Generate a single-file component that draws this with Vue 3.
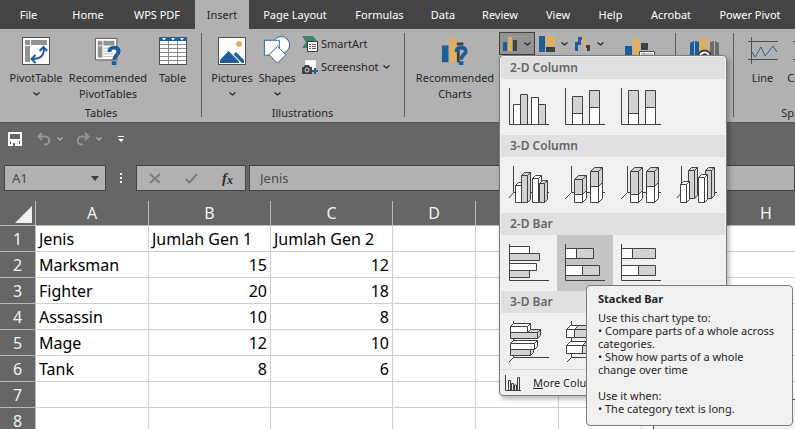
<script setup>
import { ref } from 'vue'

const tabs = ['File', 'Home', 'WPS PDF', 'Insert', 'Page Layout', 'Formulas', 'Data', 'Review', 'View', 'Help', 'Acrobat', 'Power Pivot']
const activeTab = ref('Insert')
const cellValue = ref('Jenis')
const cellName = ref('A1')

const columns = ['A', 'B', 'C', 'D', 'E', 'F', 'G', 'H']
const rows = [
  ['Jenis', 'Jumlah Gen 1', 'Jumlah Gen 2'],
  ['Marksman', 15, 12],
  ['Fighter', 20, 18],
  ['Assassin', 10, 8],
  ['Mage', 12, 10],
  ['Tank', 8, 6],
  [],
  [],
]

const W = '#ffffff'
const G = '#d2d2d2'

// A block is [x, y, width, height, fill, depthX, depthY].
function faces([x, y, w, h, fill, dx = 0, dy = 0]) {
  const out = [{ d: `M${x} ${y}h${w}v${h}h${-w}z`, fill }]
  if (dx) {
    out.push({ d: `M${x} ${y}l${dx} ${-dy}h${w}l${-dx} ${dy}z`, fill })
    out.push({ d: `M${x + w} ${y}l${dx} ${-dy}v${h}l${-dx} ${dy}z`, fill })
  }
  return out
}

const flatAxis = 'M.5 1V37.5H40'
const sections = [
  {
    title: '2-D Column',
    items: [
      { name: 'Clustered Column', axis: flatAxis, blocks: [[4.5, 17.5, 7, 20, W], [11.5, 7.5, 7, 30, G], [22.5, 10.5, 7, 27, W], [29.5, 17.5, 7, 20, G]] },
      { name: 'Stacked Column', axis: flatAxis, blocks: [[7.5, 9.5, 10, 17, G], [7.5, 26.5, 10, 11, W], [24.5, 3.5, 10, 17, G], [24.5, 20.5, 10, 17, W]] },
      { name: '100% Stacked Column', axis: flatAxis, blocks: [[7.5, 3.5, 10, 23, G], [7.5, 26.5, 10, 11, W], [24.5, 3.5, 10, 17, G], [24.5, 20.5, 10, 17, W]] },
    ],
  },
  {
    title: '3-D Column',
    items: [
      { name: '3-D Clustered Column', axis: 'M4.5 1V27.5L0 33M4.5 27.5H40', blocks: [[6.5, 20.5, 6, 17, W, 3, 3], [12.5, 10.5, 6, 27, G, 3, 3], [23.5, 13.5, 6, 24, W, 3, 3], [30.5, 18.5, 5, 19, G, 3, 3]] },
      { name: '3-D Stacked Column', axis: 'M6.5 1V27.5L0 34M6.5 27.5H40', blocks: [[9.5, 29.5, 8, 8, W, 4, 4], [9.5, 14.5, 8, 15, G, 4, 4], [25.5, 21.5, 8, 16, W, 4, 4], [25.5, 6.5, 8, 15, G, 4, 4]] },
      { name: '3-D 100% Stacked Column', axis: 'M6.5 1V27.5L0 34M6.5 27.5H40', blocks: [[9.5, 29.5, 8, 8, W, 4, 4], [9.5, 6.5, 8, 23, G, 4, 4], [25.5, 21.5, 8, 16, W, 4, 4], [25.5, 6.5, 8, 15, G, 4, 4]] },
      { name: '3-D Column', axis: 'M4.5 1V27.5L0 33M4.5 27.5H40', blocks: [[11.5, 5.5, 6, 28, G, 3, 3], [3.5, 19.5, 6, 18, W, 3, 3], [28.5, 5.5, 6, 28, G, 3, 3], [21.5, 12.5, 6, 25, W, 3, 3]] },
    ],
  },
  {
    title: '2-D Bar',
    items: [
      { name: 'Clustered Bar', axis: flatAxis, blocks: [[0.5, 3.5, 20, 7, W], [0.5, 10.5, 30, 7, G], [0.5, 20.5, 27, 7, W], [0.5, 27.5, 20, 7, G]] },
      { name: 'Stacked Bar', selected: true, axis: flatAxis, blocks: [[0.5, 5.5, 11, 10, W], [11.5, 5.5, 17, 10, G], [0.5, 22.5, 17, 10, W], [17.5, 22.5, 17, 10, G]] },
      { name: '100% Stacked Bar', axis: flatAxis, blocks: [[0.5, 5.5, 11, 10, W], [11.5, 5.5, 23, 10, G], [0.5, 22.5, 17, 10, W], [17.5, 22.5, 17, 10, G]] },
    ],
  },
  {
    title: '3-D Bar',
    items: [
      { name: '3-D Clustered Bar', axis: 'M4.5 0V36.5L0 41M4.5 36.5H40', blocks: [[1.5, 28.5, 20, 6, G, 3, 3], [1.5, 22.5, 24, 6, W, 3, 3], [1.5, 11.5, 27, 6, G, 3, 3], [1.5, 5.5, 17, 6, W, 3, 3]] },
      { name: '3-D Stacked Bar', axis: 'M6.5 0V36.5L2 41M6.5 36.5H40', blocks: [[1.5, 8.5, 8, 8, W, 4, 4], [9.5, 8.5, 15, 8, G, 4, 4], [1.5, 24.5, 16, 8, W, 4, 4], [17.5, 24.5, 15, 8, G, 4, 4]] },
      { name: '3-D 100% Stacked Bar', axis: 'M6.5 0V36.5L2 41M6.5 36.5H40', blocks: [[1.5, 8.5, 8, 8, W, 4, 4], [9.5, 8.5, 23, 8, G, 4, 4], [1.5, 24.5, 16, 8, W, 4, 4], [17.5, 24.5, 15, 8, G, 4, 4]] },
    ],
  },
]
</script>

<template>
  <div class="app">
    <nav class="tabs">
      <button v-for="t in tabs" :key="t" class="tab" :class="{ active: t === activeTab }" @click="activeTab = t">{{ t }}</button>
    </nav>

    <div class="ribbon">
      <section class="group tables">
        <div class="tools">
          <button class="big w-pivot">
            <svg width="28" height="28" viewBox="0 0 28 28">
              <rect x=".5" y=".5" width="27" height="27" fill="#fff" stroke="#505050" />
              <path d="M3 3h5v5H3zM9 3h16v5H9zM3 9h5v16H3z" fill="#929292" />
              <path d="M21.500 10C23 18 19 22 10 22" fill="none" stroke="#1f5c99" stroke-width="2" />
              <path d="M17.500 14L21.500 10L25 14M13.500 18L9.500 22L13.500 26" fill="none" stroke="#1f5c99" stroke-width="2" />
            </svg>
            <span>PivotTable</span>
            <svg class="chev" width="7" height="4" viewBox="0 0 7 4"><path d="M.5.5L3.500 3L6.500.5" /></svg>
          </button>
          <button class="big w-rec">
            <svg width="28" height="30" viewBox="0 0 28 30">
              <path d="M.5 1.500H23.500V24.500H.5z" fill="#fff" stroke="#505050" />
              <path d="M3 4h5v5H3zM9 4h12v5H9zM3 10h5v12H3z" fill="#929292" />
              <path d="M9 12h10M9 15h10M9 18h10M9 21h10" stroke="#b9b9b9" />
              <path d="M15.500 16C15.500 12 18 11.500 20.500 11.500C23.500 11.500 25.500 13 25.500 15.500C25.500 19 20.500 19 20.500 24.500" fill="none" stroke="#1f5c99" stroke-width="4" />
              <rect x="18" y="26" width="5" height="4" fill="#1f5c99" />
            </svg>
            <span>Recommended<br />PivotTables</span>
          </button>
          <button class="big w-table">
            <svg width="28" height="28" viewBox="0 0 28 28">
              <rect x=".5" y=".5" width="27" height="27" fill="#fff" stroke="#505050" />
              <path d="M0 0h28v4H0z" fill="#1f5c99" />
              <path d="M3 1h4L5 3.500zM12 1h4L14 3.500zM21 1h4L23 3.500z" fill="#fff" />
              <path d="M1 7.500H27M1 11.500H27M1 15.500H27M1 19.500H27M1 23.500H27M9.500 4V27M18.500 4V27" stroke="#8a8a8a" />
            </svg>
            <span>Table</span>
          </button>
        </div>
        <h2>Tables</h2>
      </section>

      <section class="group illus">
        <div class="tools">
          <button class="big w-pic">
            <svg width="28" height="28" viewBox="0 0 28 28">
              <rect x=".5" y=".5" width="27" height="27" fill="#fff" stroke="#505050" />
              <circle cx="21" cy="7" r="3" fill="#dfb061" />
              <path d="M2 26V23L10.500 14L21 24.500V26z" fill="#1f5c99" />
              <path d="M15.500 17.500L18 15L26 23V26H24z" fill="#1f5c99" />
            </svg>
            <span>Pictures</span>
            <svg class="chev" width="7" height="4" viewBox="0 0 7 4"><path d="M.5.5L3.500 3L6.500.5" /></svg>
          </button>
          <button class="big w-shapes">
            <svg width="30" height="30" viewBox="0 0 30 30">
              <circle cx="19.500" cy="8.500" r="9" fill="#fff" stroke="#1f5c99" />
              <path d="M1.500 3.500H17.500V19.500H1.500z" fill="#fff" stroke="#1f5c99" />
              <path d="M15.500 10L24.500 19L15.500 28L6.500 19z" fill="#fff" stroke="#1f5c99" />
            </svg>
            <span>Shapes</span>
            <svg class="chev" width="7" height="4" viewBox="0 0 7 4"><path d="M.5.5L3.500 3L6.500.5" /></svg>
          </button>
          <div class="stack">
            <button class="small">
              <svg width="16" height="16" viewBox="0 0 16 16">
                <path d="M0 0H11L15 5L13 8H5V12H0L4 6z" fill="#3f8468" />
                <rect x="5.500" y="5.500" width="10" height="10" fill="#fff" stroke="#404040" />
                <path d="M7 8.500h2M10 8.500h4M7 10.500h2M10 10.500h4M7 12.500h2M10 12.500h4" stroke="#606060" />
              </svg>
              SmartArt
            </button>
            <button class="small">
              <svg width="16" height="16" viewBox="0 0 16 16">
                <path d="M3.500 1.500h10v9h-10z" fill="#fff" stroke="#fff" stroke-dasharray="2 1" />
                <path d="M0 8h2l1-2h4l1 2h2v7H0z" fill="#404040" />
                <circle cx="5" cy="11" r="2" fill="none" stroke="#ddd" />
                <path d="M13 9v6M10 12h6" stroke="#1f5c99" stroke-width="2" />
              </svg>
              Screenshot
              <svg class="chev" width="7" height="4" viewBox="0 0 7 4"><path d="M.5.5L3.500 3L6.500.5" /></svg>
            </button>
          </div>
        </div>
        <h2>Illustrations</h2>
      </section>

      <section class="group charts">
        <div class="tools">
          <button class="big w-rec">
            <svg width="28" height="30" viewBox="0 0 28 30">
              <path d="M0 9h7v18H0z" fill="#1f5c99" />
              <path d="M8 1h8v26H8z" fill="#dfb061" />
              <path d="M16 6h7v3h-7zM16 12h3v15h-3z" fill="#404040" />
              <path d="M15.500 16C15.500 12 18 11.500 20.500 11.500C23.500 11.500 25.500 13 25.500 15.500C25.500 19 20.500 19 20.500 24.500" fill="none" stroke="#1f5c99" stroke-width="4" />
              <rect x="18" y="26" width="5" height="4" fill="#1f5c99" />
            </svg>
            <span>Recommended<br />Charts</span>
          </button>
          <div class="minis">
            <button class="mini open" aria-label="Insert Column or Bar Chart">
              <svg width="15" height="16" viewBox="0 0 15 16">
                <path d="M0 6h4v9H0z" fill="#1f5c99" /><path d="M5 1h4v14H5z" fill="#dfb061" /><path d="M10 4h4v11h-4z" fill="#404040" />
              </svg>
              <svg class="chev" width="7" height="4" viewBox="0 0 7 4"><path d="M.5.5L3.500 3L6.500.5" /></svg>
            </button>
            <button class="mini" aria-label="Insert Hierarchy Chart">
              <svg width="16" height="16" viewBox="0 0 16 16">
                <path d="M0 0h6v16H0z" fill="#1f5c99" /><path d="M7 0h9v10H7z" fill="#dfb061" /><path d="M7 11h9v5H7z" fill="#404040" />
              </svg>
              <svg class="chev" width="7" height="4" viewBox="0 0 7 4"><path d="M.5.5L3.500 3L6.500.5" /></svg>
            </button>
            <button class="mini" aria-label="Insert Waterfall Chart">
              <svg width="16" height="16" viewBox="0 0 16 16">
                <path d="M0 15V6h3V1h4v3H6v5H3v6z" fill="#1f5c99" /><path d="M7 1h3v4h2v5H9V6H7z" fill="#dfb061" /><path d="M11 9h4v6h-3v-3h-1z" fill="#404040" />
              </svg>
              <svg class="chev" width="7" height="4" viewBox="0 0 7 4"><path d="M.5.5L3.500 3L6.500.5" /></svg>
            </button>
          </div>
          <button class="big w-pchart" aria-label="PivotChart">
            <svg width="30" height="28" viewBox="0 0 30 28">
              <path d="M0 9h7v17H0z" fill="#1f5c99" /><path d="M8 1h7v25H8z" fill="#dfb061" /><path d="M16 6h7v7h-7z" fill="#404040" />
              <path d="M14.500 14.500h15v13h-15z" fill="#fff" stroke="#505050" /><path d="M16 17h12M19 15v12" stroke="#929292" />
            </svg>
          </button>
        </div>
      </section>

      <section class="group tours">
        <div class="tools">
          <button class="big w-map" aria-label="3D Map">
            <svg width="30" height="28" viewBox="0 0 30 28">
              <path d="M0 6l4-2v18H0zM5 4l4 1v17H5z" fill="#1f5c99" /><path d="M10 2l4-2v20h-4zM15 0l4 2v18h-4z" fill="#dfb061" /><path d="M20 5l4-1v18h-4zM25 4l4 2v16h-4z" fill="#6b6b6b" />
              <circle cx="14.500" cy="20" r="6.500" fill="#fff" stroke="#404040" stroke-width="2" /><path d="M11 18l4-2 3 2-1 3h-5z" fill="#404040" />
            </svg>
          </button>
        </div>
      </section>

      <section class="group spark">
        <div class="tools">
          <button class="big w-spark">
            <svg width="30" height="28" viewBox="0 0 30 28">
              <path d="M0 4.500H30M0 22.500H30M3.500 0V27" stroke="#505050" fill="none" />
              <path d="M4 15L7 20L13 10L17 19L25 9L29 15" fill="none" stroke="#2a6099" />
            </svg>
            <span>Line</span>
          </button>
          <button class="big w-spark">
            <svg width="30" height="28" viewBox="0 0 30 28">
              <path d="M0 4.500H30M0 22.500H30M3.500 0V27" stroke="#505050" fill="none" />
              <path d="M6 14h4v8H6zM12 9h4v13h-4z" fill="#1f5c99" />
            </svg>
            <span>Column</span>
          </button>
        </div>
        <h2>Sparklines</h2>
      </section>
    </div>

    <div class="quick">
      <button aria-label="Save">
        <svg width="14" height="14" viewBox="0 0 14 14"><path d="M1 1H13V13H1zM1 8H13" fill="none" stroke="#fff" stroke-width="2" /><path d="M3 9h8v4H3z" fill="#fff" /><path d="M5 11h2v3H5z" fill="#666" /></svg>
      </button>
      <button aria-label="Undo">
        <svg width="14" height="14" viewBox="0 0 14 14"><path d="M5 1L1.500 4.500L5 8M2 4.500H8C14 4.500 14 13 7 12.500" fill="none" stroke="#969696" stroke-width="2" /></svg>
      </button>
      <button class="pick" aria-label="Undo history">
        <svg class="chev" width="6" height="4" viewBox="0 0 6 4"><path d="M.5.5L3 3L5.500.5" /></svg>
      </button>
      <button aria-label="Redo">
        <svg width="14" height="14" viewBox="0 0 14 14"><path d="M9 1L12.500 4.500L9 8M12 4.500H6C0 4.500 0 13 7 12.500" fill="none" stroke="#969696" stroke-width="2" /></svg>
      </button>
      <button class="pick" aria-label="Redo history">
        <svg class="chev" width="6" height="4" viewBox="0 0 6 4"><path d="M.5.5L3 3L5.500.5" /></svg>
      </button>
      <button class="custom" aria-label="Customize Quick Access Toolbar">
        <svg width="6" height="6" viewBox="0 0 6 6"><path d="M0 0h6v1H0zM0 3h6L3 6z" fill="#fff" /></svg>
      </button>
    </div>

    <div class="formula">
      <div class="name-box">
        <input v-model="cellName" aria-label="Name Box" />
        <svg width="8" height="5" viewBox="0 0 8 5"><path d="M0 0h8L4 5z" fill="#404040" /></svg>
      </div>
      <svg class="dots" width="2" height="11" viewBox="0 0 2 11"><path d="M0 0h2v2H0zM0 4h2v2H0zM0 8h2v2H0z" fill="#f2f2f2" /></svg>
      <div class="fx">
        <button aria-label="Cancel"><svg width="12" height="11" viewBox="0 0 12 11"><path d="M1 1L11 10M11 1L1 10" fill="none" stroke="#7c7c7c" stroke-width="2" /></svg></button>
        <button aria-label="Enter"><svg width="13" height="11" viewBox="0 0 13 11"><path d="M1 6L4.500 9.500L12 1" fill="none" stroke="#7c7c7c" stroke-width="2" /></svg></button>
        <button class="fn" aria-label="Insert Function">f<sub>x</sub></button>
      </div>
      <input v-model="cellValue" class="value" aria-label="Formula Bar" />
    </div>

    <div class="sheet">
      <table>
        <colgroup>
          <col class="c-row" /><col class="c-a" /><col class="c-b" /><col class="c-b" /><col class="c-d" /><col class="c-d" /><col class="c-d" /><col class="c-d" /><col class="c-d" />
        </colgroup>
        <thead>
          <tr>
            <th class="corner"><svg width="17" height="17" viewBox="0 0 17 17"><path d="M17 0V17H0z" fill="#f0f0f0" /></svg></th>
            <th v-for="c in columns" :key="c" scope="col">{{ c }}</th>
          </tr>
        </thead>
        <tbody>
          <tr v-for="(r, i) in rows" :key="i">
            <th scope="row">{{ i + 1 }}</th>
            <td v-for="(c, j) in columns" :key="c" :class="{ num: typeof r[j] === 'number' }">{{ r[j] }}</td>
          </tr>
        </tbody>
      </table>
      <div class="chart-object"></div>
    </div>

    <div class="menu">
      <section v-for="s in sections" :key="s.title">
        <h3>{{ s.title }}</h3>
        <div class="gallery">
          <button v-for="it in s.items" :key="it.name" :class="{ selected: it.selected }" :aria-label="it.name">
            <svg width="40" height="40" viewBox="0 0 40 40">
              <path :d="it.axis" fill="none" stroke="#404040" />
              <template v-for="(b, i) in it.blocks" :key="i">
                <path v-for="(f, k) in faces(b)" :key="k" :d="f.d" :fill="f.fill" stroke="#404040" stroke-linejoin="round" />
              </template>
            </svg>
          </button>
        </div>
      </section>
      <button class="more">
        <svg width="16" height="16" viewBox="0 0 16 16"><path d="M.5 0V15.500H16M3.500 15V5.500h2V15M6.500 15V8.500h2V15M9.500 15v-5h2v5M12.500 15V2.500h2V15" fill="none" stroke="#404040" /></svg>
        <span><u>M</u>ore Column Charts...</span>
      </button>
    </div>

    <div class="tip" role="tooltip">
      <strong>Stacked Bar</strong>
      <p>Use this chart type to:<br />• Compare parts of a whole across categories.<br />• Show how parts of a whole change over time</p>
      <p>Use it when:<br />• The category text is long.</p>
    </div>
  </div>
</template>

<style>
body { margin: 0; }
</style>

<style scoped>
* { box-sizing: border-box; }
.app {
  position: relative;
  display: flex;
  flex-direction: column;
  height: 100vh;
  overflow: hidden;
  background: #666;
  color: #262626;
  font: 11px/16px "Noto Sans", "Open Sans", sans-serif;
}
button, input { font: inherit; color: inherit; margin: 0; padding: 0; border: 0; background: none; }
svg { display: block; flex: none; overflow: visible; }
h2, h3, p { margin: 0; font-size: inherit; }
.chev path { fill: none; stroke: currentColor; stroke-width: 1.3; }

.tabs {
  display: grid;
  grid-template-columns: 57px 62px 76px 54px 92px 77px 50px 64px 52px 53px 68px 1fr;
  height: 29px;
  flex: none;
  background: #444;
}
.tab { color: #fff; white-space: nowrap; }
.tab.active { background: #b1b1b1; color: #262626; }

.ribbon { display: flex; height: 93px; flex: none; background: #b1b1b1; overflow: hidden; }
.group {
  position: relative;
  display: flex;
  flex: none;
  flex-direction: column;
  justify-content: space-between;
}
.group::after { content: ""; position: absolute; right: 0; top: 4px; bottom: 5px; width: 1px; background: #5c5c5c; }
.group h2 { font-weight: 400; text-align: center; padding-bottom: 1px; }
.tools { display: flex; align-items: flex-start; }
.big { display: flex; flex: none; flex-direction: column; align-items: center; padding-top: 8px; }
.big > svg:first-child { height: 28px; }
.big span { margin-top: 5px; white-space: nowrap; }
.big .chev { margin-top: 6px; }
.tables { width: 202px; padding-left: 5px; }
.tables h2 { padding-right: 5px; }
.illus { width: 203px; padding-left: 6px; }
.illus h2 { padding-right: 8px; }
.charts { width: 271px; padding-left: 9px; }
.tours { width: 58px; }
.spark { width: 142px; padding-left: 6px; }
.w-pivot { width: 62px; }
.w-rec { width: 82px; }
.w-table { width: 47px; }
.w-pic { width: 48px; }
.w-shapes { width: 42px; }
.w-pchart { width: 66px; }
.w-map { width: 57px; }
.w-spark { width: 45px; }
.stack { display: flex; flex-direction: column; gap: 7px; padding: 7px 0 0 4px; }
.small { display: flex; align-items: center; gap: 3px; white-space: nowrap; }
.small .chev { margin-left: 1px; }
.minis { display: flex; margin: 3px 0 0 3px; }
.mini { display: flex; align-items: center; justify-content: center; gap: 6px; width: 36px; height: 23px; }
.mini.open { background: #929292; border: 1px solid #404040; }

.quick { display: flex; align-items: center; height: 43px; flex: none; padding: 0 8px 10px; gap: 15px; border-top: 1px solid #5a5a5a; }
.quick .pick { color: #b5b5b5; margin: 0 -2px 0 -9px; }
.quick .custom { margin-left: 3px; }

.formula { display: flex; align-items: center; height: 26px; flex: none; padding-left: 4px; font-size: 13px; color: #4a4a4a; }
.name-box, .fx, .value { height: 26px; background: #b1b1b1; border: 1px solid #444; }
.name-box { display: flex; align-items: center; width: 102px; padding: 0 6px 0 7px; }
.name-box input { flex: 1; min-width: 0; font-size: 13px; }
.dots { margin: 0 14px; }
.fx { display: flex; align-items: center; justify-content: space-around; width: 110px; margin-right: 3px; }
.fn { color: #303030; font: italic bold 15px/16px "Liberation Serif", serif; }
.fn sub { font-size: 12px; vertical-align: -1px; line-height: 1; }
.value { flex: 1; min-width: 0; padding: 0 10px; }

.sheet { position: relative; flex: 1; padding-top: 10px; overflow: hidden; }
table { width: 100%; table-layout: fixed; border-collapse: separate; border-spacing: 0; font-size: 16px; line-height: 24px; }
.c-row { width: 36px; }
.c-a { width: 113px; }
.c-b { width: 122px; }
.c-d { width: 83px; }
th, td { height: 26px; padding: 1px 3px 0; border-right: 1px solid #cfcfcf; border-bottom: 1px solid #cfcfcf; }
th { padding: 1px 0 0; background: #666; color: #f2f2f2; font-weight: 400; border-color: #b8b8b8; }
thead th { height: 25px; padding: 0; }
td { background: #fff; color: #000; white-space: nowrap; }
.num { text-align: right; }
.corner svg { margin: 2px 0 0 15px; }
.chart-object { position: absolute; left: 653px; right: -8px; top: 208px; height: 200px; background: #f0f0f0; border: 1px solid #404040; }

.menu {
  position: absolute;
  left: 499px;
  top: 55px;
  width: 228px;
  padding: 1px 1px 0;
  background: #f0f0f0;
  border: 1px solid #7a7a7a;
  border-radius: 4px;
  box-shadow: 2px 3px 5px rgba(0, 0, 0, 0.3);
}
.menu h3 { height: 22px; padding-left: 9px; line-height: 22px; font-size: 12px; font-weight: 600; color: #666; background: #e0e0e0; }
.gallery { display: flex; }
.gallery button { width: 56px; height: 56px; padding: 8px; }
.gallery .selected { background: #c5c5c5; }
.more { display: flex; align-items: center; gap: 12px; width: 100%; height: 26px; padding-left: 4px; border-top: 1px solid #d5d5d5; }

.tip {
  position: absolute;
  left: 586px;
  top: 285px;
  width: 207px;
  padding: 6px 12px 10px 11px;
  background: #f0f0f0;
  border: 1px solid #7a7a7a;
  border-radius: 4px;
  line-height: 13px;
}
.tip strong { display: block; margin-bottom: 6px; }
.tip p + p { margin-top: 13px; }
</style>
